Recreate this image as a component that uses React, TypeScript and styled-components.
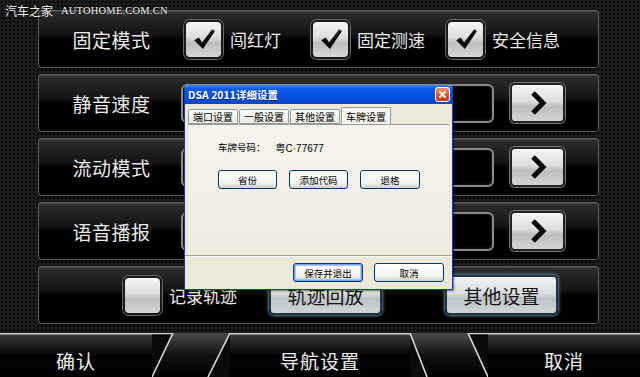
import styled, { createGlobalStyle } from 'styled-components';

const GlobalStyle = createGlobalStyle`
  html, body {
    margin: 0;
    padding: 0;
    background: #111;
  }
  body {
    font-family: "Noto Sans CJK SC", "Noto Sans", sans-serif;
  }
`;

const Screen = styled.div`
  position: relative;
  width: 640px;
  height: 377px;
  overflow: hidden;
  background-color: #1c1c1c;
  background-image: radial-gradient(#050505 1px, transparent 1.3px);
  background-size: 4px 4px;
  display: flex;
  flex-direction: column;
`;

const Watermark = styled.div`
  position: absolute;
  left: 5px;
  top: 3px;
  color: #f4f4f4;
  font-size: 12px;
  line-height: 16px;
  display: flex;
  gap: 8px;
  text-shadow: 0 0 2px #000;

  & > span:last-child {
    font-family: "Liberation Serif", serif;
    font-size: 10.5px;
    letter-spacing: 0.2px;
  }
`;

const Panels = styled.div`
  display: flex;
  flex-direction: column;
  gap: 6px;
  margin: 10px 0 0 38px;
  width: 561px;
`;

const Row = styled.div<{ $pad?: number }>`
  height: 58px;
  box-sizing: border-box;
  display: flex;
  align-items: center;
  padding-left: ${(p) => p.$pad ?? 0}px;
  border: 1px solid #5c5c5c;
  border-radius: 3px;
  background: linear-gradient(180deg, #2e2e2e 0%, #151515 40%, #000 52%, #000 100%);
  box-shadow: inset 0 1px 0 rgba(255, 255, 255, 0.12), 0 1px 0 #000;
`;

const Label = styled.div`
  width: 145px;
  flex-shrink: 0;
  text-align: center;
  color: #ececec;
  font-size: 19px;
  letter-spacing: 0.5px;
`;

const CheckGroup = styled.div<{ $w: number }>`
  width: ${(p) => p.$w}px;
  display: flex;
  align-items: center;
  gap: 7px;
  color: #ececec;
  font-size: 17px;
`;

const Box = styled.div`
  width: 39px;
  height: 39px;
  box-sizing: border-box;
  flex-shrink: 0;
  display: flex;
  align-items: center;
  justify-content: center;
  border-radius: 6px;
  border: 2px solid #1a1a1a;
  background: linear-gradient(180deg, #f6f6f6 0%, #dcdcdc 45%, #bdbdbd 60%, #d6d6d6 100%);
  box-shadow: 0 0 0 1px #6a6a6a, inset 0 1px 0 #fff;
`;

const Field = styled.div`
  width: 313px;
  height: 39px;
  box-sizing: border-box;
  margin-left: -3px;
  border: 2px solid #8a8a8a;
  border-radius: 6px;
  background: #000;
  box-shadow: inset 0 0 3px #333;
`;

const ArrowButton = styled.div`
  width: 55px;
  height: 40px;
  margin-left: 16px;
  box-sizing: border-box;
  display: flex;
  align-items: center;
  justify-content: center;
  border-radius: 5px;
  border: 2px solid #222;
  background: linear-gradient(180deg, #f4f4f4 0%, #dedede 45%, #bcbcbc 60%, #d4d4d4 100%);
  box-shadow: 0 0 0 1px #777, inset 0 1px 0 #fff;
`;

const GlassButton = styled.div<{ $ml: number }>`
  width: 113px;
  height: 40px;
  margin-left: ${(p) => p.$ml}px;
  box-sizing: border-box;
  display: flex;
  align-items: center;
  justify-content: center;
  border-radius: 5px;
  border: 2px solid #213544;
  background: linear-gradient(180deg, #f2f4f6 0%, #dadde0 45%, #bfc3c7 60%, #d0d4d8 100%);
  box-shadow: 0 0 3px 1px #5e7d94;
  color: #111;
  font-size: 19px;
`;

const OptionText = styled.span`
  color: #ececec;
  font-size: 17px;
  margin-left: 7px;
`;

const BottomBar = styled.div`
  margin-top: 9px;
  height: 44px;
  display: flex;
  background: linear-gradient(180deg, #cfcfcf 0px, #cfcfcf 1px, #3a3a3a 2px, #1e1e1e 12px, #050505 22px, #000 100%);
`;

const NavButton = styled.div<{ $w?: number }>`
  ${(p) => (p.$w ? `width: ${p.$w}px;` : 'flex: 1;')}
  display: flex;
  align-items: center;
  justify-content: center;
  padding-top: 10px;
  color: #efefef;
  font-size: 19px;
  letter-spacing: 1px;
`;

const Slash = styled.svg`
  width: 78px;
  height: 44px;
  flex-shrink: 0;
  display: block;
`;

/* ---- XP dialog ---- */

const Dialog = styled.div`
  position: absolute;
  left: 184px;
  top: 85px;
  width: 269px;
  height: 205px;
  box-sizing: border-box;
  display: flex;
  flex-direction: column;
  background: #ece9d8;
  border: 1px solid #0a3fc9;
  border-top: none;
  border-radius: 4px 4px 0 0;
  font-size: 10px;
  color: #000;
  box-shadow: 1px 1px 2px rgba(0, 0, 0, 0.5);
`;

const TitleBar = styled.div`
  height: 19px;
  display: flex;
  align-items: center;
  justify-content: space-between;
  padding: 0 2px 0 3px;
  border-radius: 4px 4px 0 0;
  background: linear-gradient(180deg, #3d8bf5 0%, #0a5ae6 20%, #0550dc 70%, #0a46c4 100%);
  color: #fff;
  font-weight: bold;
  font-size: 10.5px;
  text-shadow: 1px 1px 0 #0a2a80;
`;

const CloseBox = styled.div`
  width: 15px;
  height: 15px;
  box-sizing: border-box;
  border: 1px solid #fff;
  border-radius: 3px;
  background: linear-gradient(180deg, #f0926e 0%, #e0502b 60%, #c83a18 100%);
  display: flex;
  align-items: center;
  justify-content: center;
`;

const Tabs = styled.div`
  display: flex;
  align-items: flex-end;
  height: 18px;
  padding: 0 0 0 3px;
  margin-top: 2px;
`;

const Tab = styled.div<{ $active?: boolean }>`
  height: ${(p) => (p.$active ? 17 : 15)}px;
  padding: 0 4px;
  display: flex;
  align-items: center;
  box-sizing: border-box;
  border: 1px solid #919b9c;
  border-bottom: ${(p) => (p.$active ? 'none' : '1px solid #919b9c')};
  border-radius: 2px 2px 0 0;
  background: ${(p) => (p.$active ? '#f6f4ec' : 'linear-gradient(180deg, #fbfbf8, #ecebe4)')};
  margin-right: 1px;
`;

const TabBody = styled.div`
  flex: 1;
  margin: 0 3px;
  padding: 14px 0 0 30px;
  border-top: 1px solid #919b9c;
  display: flex;
  flex-direction: column;
  background: linear-gradient(180deg, #f6f4ec 0%, #eeebdf 100%);
`;

const PlateLine = styled.div`
  display: flex;
  gap: 10px;
  height: 16px;
  align-items: center;
  font-size: 9.5px;
`;

const Plate = styled.span`
  font-family: "Liberation Sans", "Noto Sans CJK SC", sans-serif;
  font-size: 10px;
`;

const ButtonRow = styled.div<{ $gap: number }>`
  display: flex;
  gap: ${(p) => p.$gap}px;
  margin-top: 15px;
`;

const XpButton = styled.div<{ $w: number; $default?: boolean }>`
  width: ${(p) => p.$w}px;
  height: 19px;
  box-sizing: border-box;
  display: flex;
  align-items: center;
  justify-content: center;
  border: 1px solid #003c74;
  border-radius: 3px;
  background: linear-gradient(180deg, #ffffff 0%, #f3f3ef 70%, #d6d0c5 100%);
  box-shadow: ${(p) => (p.$default ? 'inset 0 0 0 1px #7ea2e8, inset 0 0 0 2px #a9c4f5' : 'none')};
  font-size: 9.5px;
`;

const Footer = styled.div`
  height: 33px;
  border-top: 1px solid #a5a292;
  box-shadow: inset 0 1px 0 #fff;
  display: flex;
  align-items: center;
  justify-content: flex-end;
  gap: 11px;
  padding-right: 8px;
`;

const Tick = () => (
  <svg width="26" height="26" viewBox="0 0 24 24">
    <path d="M3 13.2 L7.2 10.6 L10.2 15.2 L19.6 3 L22 4.8 L11 21.2 Z" fill="#0a0a0a" />
  </svg>
);

const Chevron = () => (
  <svg width="20" height="26" viewBox="0 0 20 26">
    <path d="M5 3 L15 13 L5 23" fill="none" stroke="#0a0a0a" strokeWidth="5" strokeLinejoin="miter" />
  </svg>
);

const Divider = ({ flip }: { flip?: boolean }) => {
  // two slanted strokes with a glossy wedge between them
  const a = flip ? [0, 17] : [21, 0];
  const b = flip ? [58, 78] : [78, 56];
  const id = flip ? 'wr' : 'wl';
  return (
    <Slash viewBox="0 0 78 44">
      <defs>
        <linearGradient id={id} x1="0" y1="0" x2="0" y2="1">
          <stop offset="0" stopColor="#4a4a4a" />
          <stop offset="0.5" stopColor="#111" />
          <stop offset="1" stopColor="#000" />
        </linearGradient>
      </defs>
      <rect x="0" y="0" width="78" height="44" fill="#000" />
      <polygon points={`${a[0]},0 ${b[0]},0 ${b[1]},44 ${a[1]},44`} fill={`url(#${id})`} />
      <polygon points={`0,0 ${a[0]},0 ${a[1]},44 0,44`} fill="#0a0a0a" />
      <polygon points={`${b[0]},0 78,0 78,44 ${b[1]},44`} fill="#0a0a0a" />
      <line x1={a[0]} y1="0" x2={a[1]} y2="44" stroke="#d8d8d8" strokeWidth="1.6" />
      <line x1={b[0]} y1="0" x2={b[1]} y2="44" stroke="#d8d8d8" strokeWidth="1.6" />
      <line x1="0" y1="0.5" x2={a[0]} y2="0.5" stroke="#cfcfcf" strokeWidth="1.5" />
      <line x1={b[0]} y1="0.5" x2="78" y2="0.5" stroke="#cfcfcf" strokeWidth="1.5" />
    </Slash>
  );
};

const ArrowRow = ({ label }: { label: string }) => (
  <Row>
    <Label>{label}</Label>
    <Field />
    <ArrowButton>
      <Chevron />
    </ArrowButton>
  </Row>
);

export default function App() {
  return (
    <Screen>
      <GlobalStyle />
      <Watermark>
        <span>汽车之家</span>
        <span>AUTOHOME.COM.CN</span>
      </Watermark>

      <Panels>
        <Row>
          <Label>固定模式</Label>
          <CheckGroup $w={127}>
            <Box>
              <Tick />
            </Box>
            闯红灯
          </CheckGroup>
          <CheckGroup $w={135}>
            <Box>
              <Tick />
            </Box>
            固定测速
          </CheckGroup>
          <CheckGroup $w={120}>
            <Box>
              <Tick />
            </Box>
            安全信息
          </CheckGroup>
        </Row>
        <ArrowRow label="静音速度" />
        <ArrowRow label="流动模式" />
        <ArrowRow label="语音播报" />
        <Row $pad={84}>
          <Box />
          <OptionText>记录轨迹</OptionText>
          <GlassButton $ml={32}>轨迹回放</GlassButton>
          <GlassButton $ml={63}>其他设置</GlassButton>
        </Row>
      </Panels>

      <BottomBar>
        <NavButton $w={152}>确认</NavButton>
        <Divider />
        <NavButton $w={180}>导航设置</NavButton>
        <Divider flip />
        <NavButton>取消</NavButton>
      </BottomBar>

      <Dialog>
        <TitleBar>
          <span>DSA 2011详细设置</span>
          <CloseBox>
            <svg width="9" height="9" viewBox="0 0 9 9">
              <path d="M1.5 1.5 L7.5 7.5 M7.5 1.5 L1.5 7.5" stroke="#fff" strokeWidth="1.8" />
            </svg>
          </CloseBox>
        </TitleBar>
        <Tabs>
          <Tab>端口设置</Tab>
          <Tab>一般设置</Tab>
          <Tab>其他设置</Tab>
          <Tab $active>车牌设置</Tab>
        </Tabs>
        <TabBody>
          <PlateLine>
            <span>车牌号码：</span>
            <Plate>粤C·77677</Plate>
          </PlateLine>
          <ButtonRow $gap={12}>
            <XpButton $w={59}>省份</XpButton>
            <XpButton $w={59}>添加代码</XpButton>
            <XpButton $w={60}>退格</XpButton>
          </ButtonRow>
        </TabBody>
        <Footer>
          <XpButton $w={70} $default>
            保存并退出
          </XpButton>
          <XpButton $w={70}>取消</XpButton>
        </Footer>
      </Dialog>
    </Screen>
  );
}
